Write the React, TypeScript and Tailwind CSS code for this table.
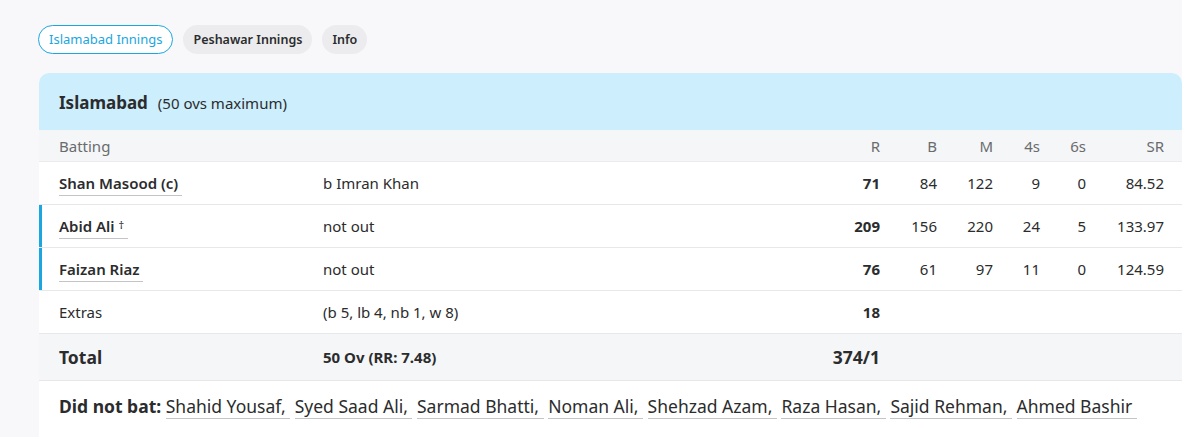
import React from "react";

type Batter = {
  name: string;
  suffix?: string;
  dismissal: string;
  r: string;
  b: string;
  m: string;
  fours: string;
  sixes: string;
  sr: string;
  atCrease?: boolean;
};

const batters: Batter[] = [
  { name: "Shan Masood", suffix: " (c)", dismissal: "b Imran Khan", r: "71", b: "84", m: "122", fours: "9", sixes: "0", sr: "84.52" },
  { name: "Abid Ali", suffix: " †", dismissal: "not out", r: "209", b: "156", m: "220", fours: "24", sixes: "5", sr: "133.97", atCrease: true },
  { name: "Faizan Riaz", dismissal: "not out", r: "76", b: "61", m: "97", fours: "11", sixes: "0", sr: "124.59", atCrease: true },
];

const didNotBat = ["Shahid Yousaf", "Syed Saad Ali", "Sarmad Bhatti", "Noman Ali", "Shehzad Azam", "Raza Hasan", "Sajid Rehman", "Ahmed Bashir"];

const cols = "grid grid-cols-[264px_497px_60px_57px_56px_47px_46px_78px] items-center pl-5 pr-[18px]";

const App = () => {
  return (
    <div
      className="min-h-[437px] bg-[#f8f8fa] pl-[39px] pt-[25px] text-[#2b2c2d]"
      style={{ fontFamily: '"Noto Sans", "Open Sans", sans-serif' }}
    >
      {/* tabs */}
      <div className="flex items-center gap-[10px] -ml-px">
        <button className="h-[29px] px-[10px] pt-px rounded-full border border-[#1ba6e0] bg-white text-[13px] text-[#1ba6e0]">
          Islamabad Innings
        </button>
        <button className="h-[29px] px-[10px] pt-px rounded-full bg-[#ececee] text-[12.5px] font-semibold text-[#2b2c2d]">
          Peshawar Innings
        </button>
        <button className="h-[29px] px-[10px] pt-px rounded-full bg-[#ececee] text-[12.5px] font-semibold text-[#2b2c2d]">
          Info
        </button>
      </div>

      {/* scorecard */}
      <div className="mt-[19px] rounded-t-[10px] bg-white overflow-hidden">
        <div className="h-[57px] bg-[#cdeefc] flex items-center pl-5 pt-[3px] gap-[10px]">
          <span className="text-[17px] font-bold">Islamabad</span>
          <span className="text-[15px]">(50 ovs maximum)</span>
        </div>

        <div className={`${cols} h-[32px] pt-px bg-[#f5f6f8] text-[15px] text-[#6a6b6d] border-b border-[#ebebed]`}>
          <span>Batting</span>
          <span></span>
          <span className="text-right">R</span>
          <span className="text-right">B</span>
          <span className="text-right">M</span>
          <span className="text-right">4s</span>
          <span className="text-right">6s</span>
          <span className="text-right">SR</span>
        </div>

        {batters.map((p) => (
          <div
            key={p.name}
            className={`${cols} h-[43px] text-[15px] border-b border-[#e8e8ea] ${p.atCrease ? "shadow-[inset_3px_0_0_#1ba6e0]" : ""}`}
          >
            <span>
              <span className="font-semibold border-b border-[#c4c4c6] pb-[2px]">
                {p.name}
                {p.suffix === " †" ? <span className="text-[11px] relative -top-[3px] ml-1 font-normal">†</span> : p.suffix}
                {"\u00a0"}
              </span>
            </span>
            <span>{p.dismissal}</span>
            <span className="text-right font-bold">{p.r}</span>
            <span className="text-right">{p.b}</span>
            <span className="text-right">{p.m}</span>
            <span className="text-right">{p.fours}</span>
            <span className="text-right">{p.sixes}</span>
            <span className="text-right">{p.sr}</span>
          </div>
        ))}

        <div className={`${cols} h-[43px] text-[15px] border-b border-[#e8e8ea]`}>
          <span>Extras</span>
          <span>(b 5, lb 4, nb 1, w 8)</span>
          <span className="text-right font-bold">18</span>
        </div>

        <div className={`${cols} h-[47px] bg-[#f5f6f8] border-b border-[#e8e8ea]`}>
          <span className="text-[17.5px] font-bold">Total</span>
          <span className="text-[15px] font-bold">50 Ov (RR: 7.48)</span>
          <span className="text-right text-[17.5px] font-bold">374/1</span>
        </div>

        <div className="h-[57px] pl-5 pt-[12px] text-[17.5px]">
          <span className="font-bold">Did not bat: </span>
          {didNotBat.map((n, i) => (
            <React.Fragment key={n}>
              <span className="border-b border-[#c4c4c6]">
                {n}
                {i < didNotBat.length - 1 ? ",\u00a0" : "\u00a0"}
              </span>
              {i < didNotBat.length - 1 ? " " : ""}
            </React.Fragment>
          ))}
        </div>
      </div>
    </div>
  );
};

export default App;
